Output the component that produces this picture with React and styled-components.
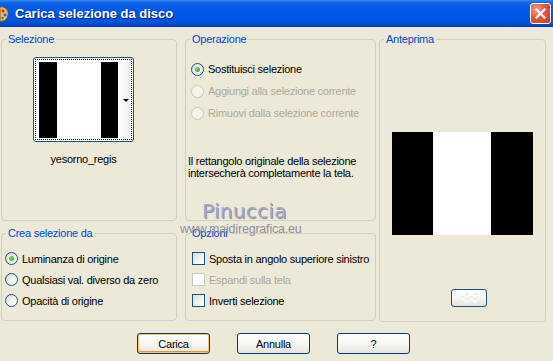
import React from 'react'
import styled, { createGlobalStyle } from 'styled-components';

const GlobalStyle = createGlobalStyle`
  html, body { margin: 0; padding: 0; background: #ECE9D8; }
  * { box-sizing: border-box; }
`;

const Window = styled.div`
  width: 553px; height: 361px; background: #ECE9D8; position: relative; overflow: hidden;
  font-family: "Liberation Sans", Tahoma, Arial, sans-serif; font-size: 11px; letter-spacing: -0.25px; color: #000;
`;

const TitleBar = styled.div`
  height: 27px; display: flex; align-items: center; justify-content: space-between;
  background: linear-gradient(180deg, #3A8CF8 0%, #0F63E6 10%, #0058E6 40%, #0055E0 75%, #0049CC 92%, #003DB5 100%);
`;

const TitleLeft = styled.div`display: flex; align-items: center; gap: 6px;`

const TitleText = styled.span`
  font: bold 13px "Liberation Sans", Arial, sans-serif; color: #fff; letter-spacing: 0;
  text-shadow: 1px 1px 0 #0A1E8C;
`;

const CloseBtn = styled.div`
  width: 21px; height: 21px; margin-right: 2px; border: 1px solid #fff; border-radius: 3px;
  background: radial-gradient(circle at 30% 30%, #F1A08A 0%, #E0593A 45%, #C73A1C 100%);
  display: flex; align-items: center; justify-content: center;
`;

const Body = styled.div`padding: 6px 0 0 1px; display: flex; flex-direction: column;`

const Panels = styled.div`display: flex; gap: 3px;`

const LeftGrid = styled.div`
  display: grid; grid-template-columns: 176px 191px; grid-template-rows: 188px 94px; column-gap: 8px; row-gap: 6px;
`;

const Group = styled.fieldset`
  margin: 0; padding: 0; min-width: 0; border: 1px solid #D0D0BF; border-radius: 4px;
  width: ${p => p.$w}px; height: ${p => p.$h ? p.$h + 'px' : 'auto'};
`;

const Legend = styled.legend`
  color: #0046D5; padding: 0 2px; margin-left: 4px; line-height: 13px;
`;

const Inner = styled.div`
  display: flex; flex-direction: column; align-items: ${p => p.$align || 'flex-start'};
  padding: ${p => p.$pad};
`;

const ThumbWrap = styled.div`display: flex; flex-direction: column; align-items: center; gap: 11px;`

const Thumb = styled.div`
  width: 101px; height: 85px; border: 1px solid #1C5180; border-radius: 3px; background: #fff; padding: 1px;
`;

const Focus = styled.div`
  height: 100%; border: 1px dotted #000; display: flex; padding: 2px 0 1px 3px;
`;

const Bar = styled.div`width: ${p => p.$w}px; background: ${p => p.$c};`

const Strip = styled.div`
  flex: 1; background: linear-gradient(90deg, #fff, #F0F0EC); margin-right: 1px;
  display: flex; align-items: center; justify-content: flex-end; padding-right: 1px;
`;

const Arrow = styled.div`
  width: 0; height: 0; border-left: 3px solid transparent; border-right: 3px solid transparent; border-top: 3px solid #000;
`;

const ThumbLabel = styled.div`font-size: 11px;`

const OptRow = styled.label`
  display: flex; align-items: center; gap: 4px; height: ${p => p.$h}px; white-space: nowrap;
  color: ${p => p.$disabled ? '#ACA899' : '#000'};
`;

const Radio = styled.span`
  width: 13px; height: 13px; border-radius: 50%; flex: none; position: relative;
  border: 1px solid ${p => p.$disabled ? '#CAC8BB' : '#1C5180'};
  background: ${p => p.$disabled ? '#F5F4EA' : 'linear-gradient(135deg, #DCDAD0 0%, #F4F3EE 55%, #fff 100%)'};
  &::after {
    content: ''; display: ${p => p.$checked ? 'block' : 'none'}; position: absolute; left: 3px; top: 3px;
    width: 5px; height: 5px; border-radius: 50%; background: radial-gradient(circle at 35% 35%, #6BE06A, #21A121);
  }
`;

const Check = styled.span`
  width: 13px; height: 13px; flex: none;
  border: 1px solid ${p => p.$disabled ? '#CAC8BB' : '#1C5180'};
  background: ${p => p.$disabled ? '#fff' : 'linear-gradient(135deg, #DCDCD7 0%, #F4F4F0 60%, #fff 100%)'};
`;

const Info = styled.p`margin: 31px 0 0 -3px; line-height: 12px;`

const Preview = styled.div`display: flex; height: 103px; margin-top: 86px;`

const SmallBtn = styled.div`
  align-self: flex-start;
  width: 36px; height: 18px; margin: 54px 0 0 71px; border: 1px solid #1C5180; border-radius: 3px;
  background: linear-gradient(180deg, #fff 0%, #F3F3EF 60%, #E4E2DA 100%);
  display: flex; align-items: center; justify-content: center;
`;

const Checker = styled.div`
  width: 16px; height: 10px; opacity: 0.6;
  background: repeating-conic-gradient(#E8E8E8 0% 25%, #fff 0% 50%) 0 0 / 8px 5px;
`;

const ButtonRow = styled.div`display: flex; gap: 27px; padding-left: 136px; margin-top: 11px;`

const Button = styled.button`
  width: 73px; height: 21px; padding: 0; border: 1px solid #003C74; border-radius: 3px;
  font: 11px "Liberation Sans", Tahoma, Arial, sans-serif; letter-spacing: -0.25px; color: #000;
  background: linear-gradient(180deg, #fff 0%, #F5F5F1 55%, #E6E4DC 100%);
  box-shadow: ${p => p.$default ? 'inset 0 0 0 1px #F8C36A, inset 0 -1px 0 1px #E5972C' : 'none'};
`;

const Watermark = styled.div`
  position: absolute; left: 180px; top: 199px; display: flex; flex-direction: column; pointer-events: none;
  letter-spacing: 0;
`;

const WmName = styled.span`
  margin-left: 22px; font: 20px "DejaVu Sans", sans-serif; color: #A9A9C2; letter-spacing: 0.3px;
  text-shadow: 1px 1px 0 #8E8EA2;
`;

const WmSite = styled.span`font: 12.5px "Liberation Sans", sans-serif; color: #8E8E9C; margin-top: -1px; letter-spacing: -0.2px;`

function Opt({ kind, label, checked, disabled, h }) {
  return (
    <OptRow $h={h} $disabled={disabled}>
      {kind === 'radio'
        ? <Radio $checked={checked} $disabled={disabled} />
        : <Check $disabled={disabled} />}
      {label}
    </OptRow>
  )
}

export default function App() {
  return (
    <Window>
      <GlobalStyle />
      <TitleBar>
        <TitleLeft>
          <svg width="9" height="18" viewBox="0 0 9 18">
            <path d="M0 2 C5 1 9 5 8 10 C7 15 3 17 0 16 Z" fill="#E9B96E" stroke="#7A4A12" strokeWidth="0.8" />
            <circle cx="3" cy="6" r="1.4" fill="#D02020" />
            <circle cx="5" cy="10" r="1.4" fill="#2060D0" />
            <circle cx="2.5" cy="13" r="1.3" fill="#20A040" />
          </svg>
          <TitleText>Carica selezione da disco</TitleText>
        </TitleLeft>
        <CloseBtn>
          <svg width="11" height="11" viewBox="0 0 11 11">
            <path d="M1.5 1.5 L9.5 9.5 M9.5 1.5 L1.5 9.5" stroke="#fff" strokeWidth="2.2" strokeLinecap="square" />
          </svg>
        </CloseBtn>
      </TitleBar>

      <Body>
        <Panels>
          <LeftGrid>
            <Group $w={176}>
              <Legend>Selezione</Legend>
              <Inner $pad="11px 0 0 31px">
                <ThumbWrap>
                  <Thumb>
                    <Focus>
                      <Bar $w={18} $c="#000" />
                      <Bar $w={44} $c="#fff" />
                      <Bar $w={17} $c="#000" />
                      <Strip><Arrow /></Strip>
                    </Focus>
                  </Thumb>
                  <ThumbLabel>yesorno_regis</ThumbLabel>
                </ThumbWrap>
              </Inner>
            </Group>

            <Group $w={191}>
              <Legend>Operazione</Legend>
              <Inner $pad="12px 0 0 5px">
                <Opt kind="radio" h={22} checked label="Sostituisci selezione" />
                <Opt kind="radio" h={22} disabled label="Aggiungi alla selezione corrente" />
                <Opt kind="radio" h={22} disabled label="Rimuovi dalla selezione corrente" />
                <Info>Il rettangolo originale della selezione<br />intersecherà completamente la tela.</Info>
              </Inner>
            </Group>

            <Group $w={176}>
              <Legend>Crea selezione da</Legend>
              <Inner $pad="8px 0 0 3px">
                <Opt kind="radio" h={21} checked label="Luminanza di origine" />
                <Opt kind="radio" h={21} label="Qualsiasi val. diverso da zero" />
                <Opt kind="radio" h={21} label="Opacità di origine" />
              </Inner>
            </Group>

            <Group $w={191}>
              <Legend>Opzioni</Legend>
              <Inner $pad="8px 0 0 6px">
                <Opt kind="check" h={21} label="Sposta in angolo superiore sinistro" />
                <Opt kind="check" h={21} disabled label="Espandi sulla tela" />
                <Opt kind="check" h={21} label="Inverti selezione" />
              </Inner>
            </Group>
          </LeftGrid>

          <Group $w={167} $h={289}>
            <Legend>Anteprima</Legend>
            <Inner $pad="0" $align="center">
              <Preview>
                <Bar $w={41} $c="#000" />
                <Bar $w={58} $c="#fff" />
                <Bar $w={42} $c="#000" />
              </Preview>
              <SmallBtn><Checker /></SmallBtn>
            </Inner>
          </Group>
        </Panels>

        <ButtonRow>
          <Button $default>Carica</Button>
          <Button>Annulla</Button>
          <Button>?</Button>
        </ButtonRow>
      </Body>

      <Watermark>
        <WmName>Pinuccia</WmName>
        <WmSite>www.maidiregrafica.eu</WmSite>
      </Watermark>
    </Window>
  )
}
